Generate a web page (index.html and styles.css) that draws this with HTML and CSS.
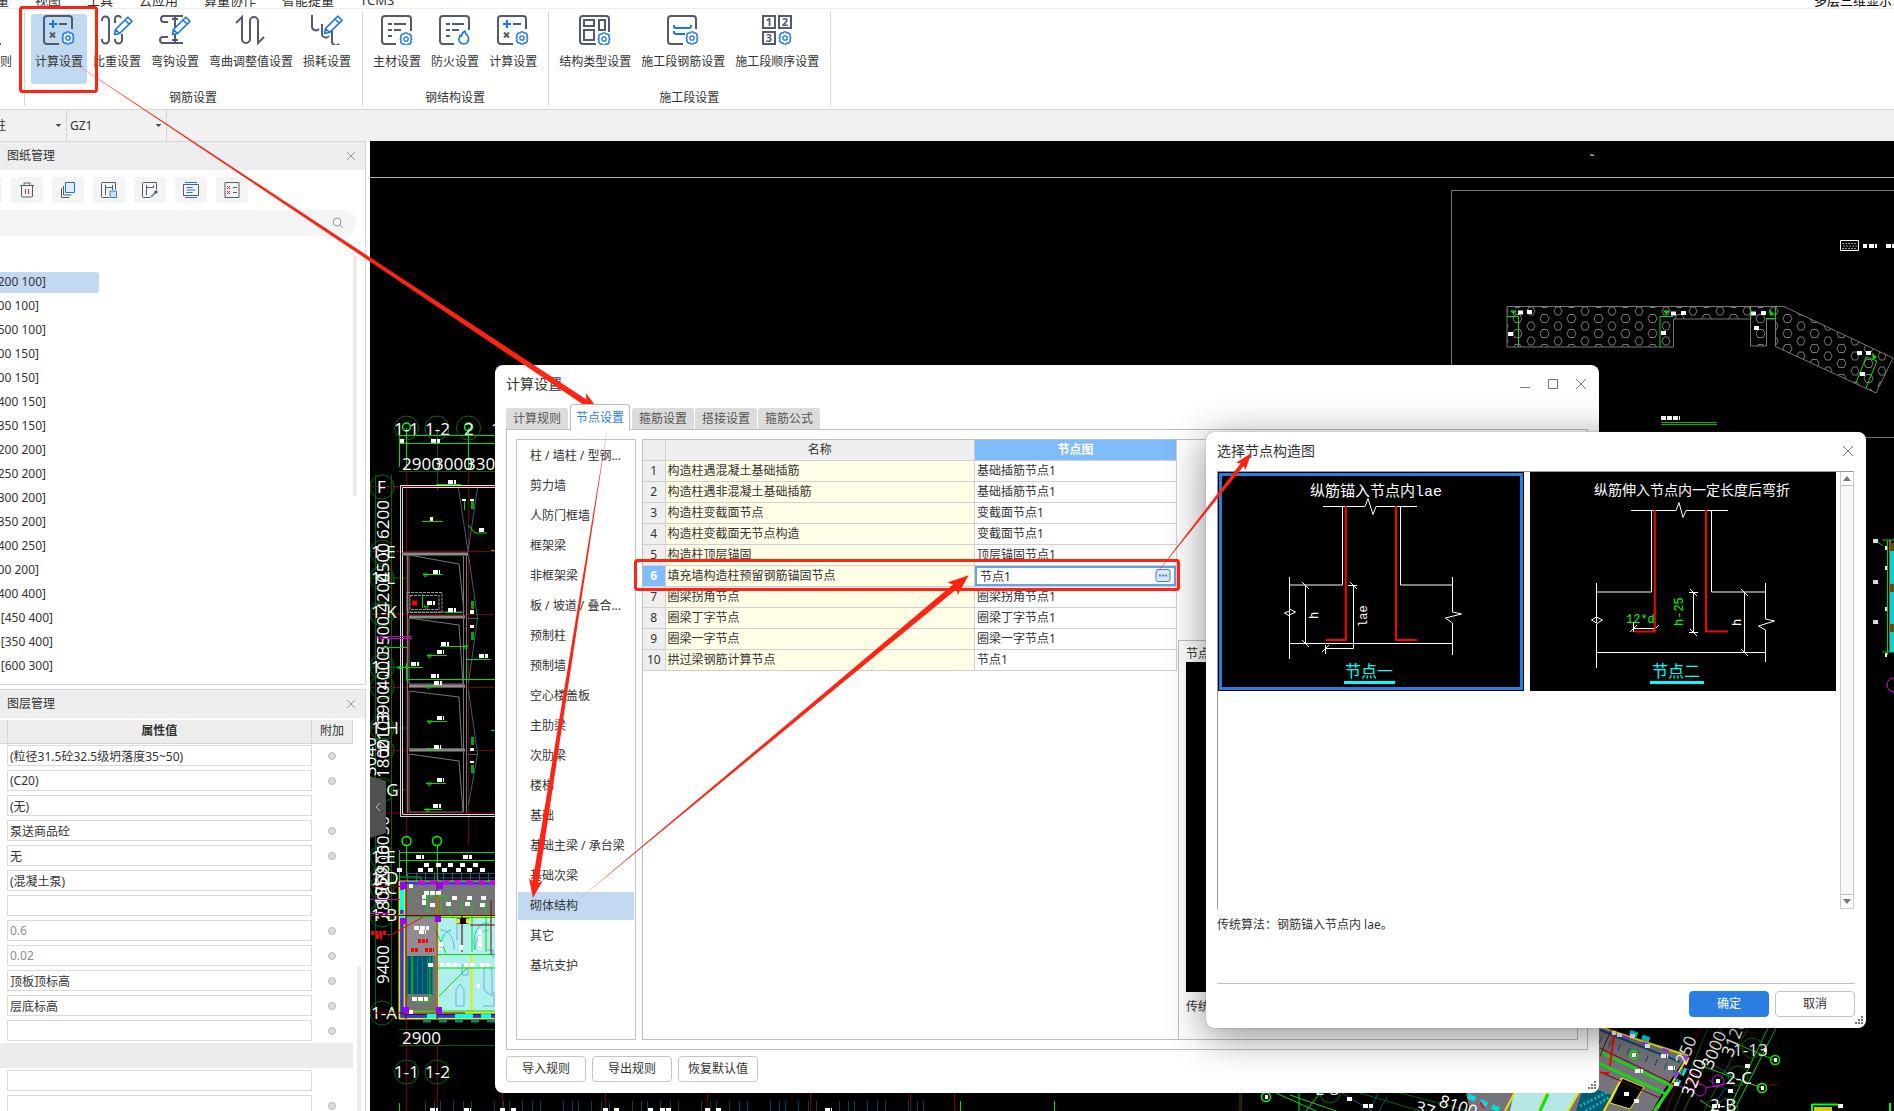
FILE: index.html
```html
<!DOCTYPE html>
<html lang="zh-CN">
<head>
  <meta charset="UTF-8" />
  <meta name="viewport" content="width=device-width, initial-scale=1" />
  <title>计算设置</title>
  <link rel="stylesheet" href="styles.css">
</head>
<body>
  <!-- shared icon parts -->
  <svg class="defs" aria-hidden="true">
    <symbol id="gear" viewBox="0 0 14 14">
      <path d="M5 2.2 6 .8h2l1 1.4 1.800-.2 1.600 2-.6 1.600 1 1.400-1 1.400.6 1.600-1.600 2-1.800-.2-1 1.400H6l-1-1.400-1.800.2-1.600-2 .6-1.600-1-1.400 1-1.400-.6-1.600 1.600-2z" fill="#fff" fill-opacity=".5" stroke="#1a73e8" stroke-width="1.3" stroke-linejoin="round"/>
      <circle cx="7" cy="7" r="2.2" fill="none" stroke="#1a73e8" stroke-width="1.3"/>
    </symbol>
    <symbol id="pencil" viewBox="0 0 20 20">
      <path d="M1.5 18.5l1-5L14 2l1-.8 4 4-.8 1L6.500 17.500zM12 4l4 4M2.500 13.500l4 4" fill="#fff" stroke="#1a73e8" stroke-width="1.6" stroke-linejoin="round"/>
    </symbol>
    <symbol id="calc" viewBox="0 0 32 30">
      <path class="ln" d="M29 14V4a3 3 0 0 0-3-3H4a3 3 0 0 0-3 3v22a3 3 0 0 0 3 3h12M16 9h8M7 17.500l5 5M12 17.500l-5 5"/>
      <path d="M6 9h8M10 5v8" fill="none" stroke="#1a73e8" stroke-width="2"/>
      <use href="#gear" x="18" y="16" width="14" height="14"/>
    </symbol>
  </svg>

  <nav class="menu">
    <a href="#">工程量</a><a href="#">视图</a><a href="#">工具</a><a href="#">云应用</a><a href="#">算量协作</a><a href="#">智能提量</a><a href="#">TCMS</a>
    <a class="menu-end" href="#">多层三维显示设置</a>
  </nav>

  <header class="ribbon">
    <section class="group group-cut">
      <div class="tools">
        <button class="tool"><svg width="32" height="30"><path class="ln" d="M17 6l8 8-8 8M15 29h14"/></svg>计算规则</button>
      </div>
    </section>
    <section class="group">
      <div class="tools">
        <button class="tool on"><svg width="32" height="30"><use href="#calc"/></svg>计算设置</button>
        <button class="tool"><svg width="32" height="30"><path class="ln" d="M1 6V5a3 3 0 0 1 7 0v20a3 3 0 0 1-7 0v-1M14 8V5a3 3 0 0 1 6-2M14 24v1a3 3 0 0 0 7 0v-6"/><use href="#pencil" x="12" y="1" width="20" height="20"/></svg>比重设置</button>
        <button class="tool"><svg width="32" height="30"><path class="ln" d="M24 1H5a3 3 0 0 0 0 6h4M24 28H4a3 3 0 0 1 0-6h5M16 1v27M13 4h6M13 25h6"/><use href="#pencil" x="12" y="1" width="20" height="20"/></svg>弯钩设置</button>
        <button class="tool"><svg width="32" height="30"><path class="ln" d="M1 8l6-6v22a4 4 0 0 0 8 0V6a4 4 0 0 1 8 0v22l6-6"/></svg>弯曲调整值设置</button>
        <button class="tool"><svg width="32" height="30"><path class="ln" d="M1 0v12a4 4 0 0 0 7 2M11 9v11a4 4 0 0 0 7 1M21 16v10a4 4 0 0 0 7 3"/><use href="#pencil" x="12" y="0" width="20" height="20"/></svg>损耗设置</button>
      </div>
      <h2>钢筋设置</h2>
    </section>
    <section class="group">
      <div class="tools">
        <button class="tool"><svg width="32" height="30"><path class="ln" d="M30 16V4a3 3 0 0 0-3-3H4a3 3 0 0 0-3 3v22a3 3 0 0 0 3 3h11M7 9h4M13 9h12M7 15h4M13 15h7M7 21h4"/><use href="#gear" x="18" y="17" width="14" height="14"/></svg>主材设置</button>
        <button class="tool"><svg width="32" height="30"><path class="ln" d="M30 15V4a3 3 0 0 0-3-3H4a3 3 0 0 0-3 3v22a3 3 0 0 0 3 3h11M7 9h4M13 9h12M7 15h4M13 15h7M7 21h4"/><path d="M21 20c1 2 2 1 2 0 0-2 1-3 3-4 0 3 3 4 3.500 7 .5 4-2 6-4.500 6s-5.500-2-5-5c0-2 1-2 1-4z" fill="#fff" stroke="#1a73e8" stroke-width="1.6" stroke-linejoin="round"/></svg>防火设置</button>
        <button class="tool"><svg width="32" height="30"><use href="#calc"/></svg>计算设置</button>
      </div>
      <h2>钢结构设置</h2>
    </section>
    <section class="group">
      <div class="tools">
        <button class="tool"><svg width="32" height="30"><path class="ln" d="M30 17V4a3 3 0 0 0-3-3H4a3 3 0 0 0-3 3v22a3 3 0 0 0 3 3h13M5 5h10v6H5zM20 5h6v10h-6zM5 15h10v10H5z"/><use href="#gear" x="18" y="17" width="14" height="14"/></svg>结构类型设置</button>
        <button class="tool"><svg width="32" height="30"><path class="ln" d="M29 14V4a3 3 0 0 0-3-3H4a3 3 0 0 0-3 3v22a3 3 0 0 0 3 3h12"/><path d="M7 10v1a2 2 0 0 0 2 2h13a2 2 0 0 0 2-2v-1M7 16v1a2 2 0 0 0 2 2h9" fill="none" stroke="#1a73e8" stroke-width="2"/><use href="#gear" x="18" y="16" width="14" height="14"/></svg>施工段钢筋设置</button>
        <button class="tool"><svg width="32" height="30"><path class="ln" d="M2 1h12v12H2zM18 1h12v12H18zM2 17h12v12H2z"/><g class="num"><text x="8" y="11">1</text><text x="24" y="11">2</text><text x="8" y="27">3</text></g><use href="#gear" x="17" y="16" width="14" height="14"/></svg>施工段顺序设置</button>
      </div>
      <h2>施工段设置</h2>
    </section>
  </header>

  <div class="combos">
    <select class="combo combo-kind" aria-label="构件类型"><option>构造柱</option></select>
    <select class="combo" aria-label="构件名称"><option>GZ1</option></select>
  </div>

  <main class="work">
    <aside class="side">
      <section class="panel sheets">
        <header class="panel-head"><h2>图纸管理</h2><button aria-label="关闭图纸管理"><svg width="10" height="10"><path d="M1 1l8 8M9 1L1 9"/></svg></button></header>
        <div class="sheet-tools">
          <button aria-label="添加"></button>
          <button aria-label="删除"><svg width="16" height="16"><path class="thin" d="M1 3.500h14M5 3V1h6v2M2.500 4v10a1 1 0 0 0 1 1h9a1 1 0 0 0 1-1V4"/><path d="M6.500 7v5M9.500 7v5" stroke="#d22"/></svg></button>
          <button aria-label="复制"><svg width="16" height="16"><path d="M5.500.5h9v10h-9z" fill="#e3eefc" stroke="#1a73e8"/><path class="thin" d="M3.500 4v9h8M1.500 6v9.500h8"/></svg></button>
          <button aria-label="保存图纸"><svg width="16" height="16"><path class="thin" d="M8 15.500H1.500A1 1 0 0 1 .5 14.500v-13a1 1 0 0 1 1-1h13v7M4.500 3v10M4.500 5.500h7V3M11.500 5v3"/><path d="M9 9h6.500v6.500H9z" fill="#cfe1fa" stroke="#3b82e0"/></svg></button>
          <button aria-label="编辑图纸"><svg width="16" height="16"><path class="thin" d="M8 15.500H1.500A1 1 0 0 1 .5 14.500v-13a1 1 0 0 1 1-1h13v7M4.500 3v10M4.500 5.500h7V3"/><path d="M9 15l5-5" stroke="#8a93a5" stroke-width="2"/><path d="M13 9l2 2" stroke="#555b6b" stroke-width="3"/></svg></button>
          <button aria-label="图层显示"><svg width="16" height="16"><path class="thin" d="M.5 2.500h15v11H.5z"/><path d="M2 .5h12M2 15.500h12M3.500 5.500h6M3.500 8h9M3.500 10.500h6" stroke="#1a73e8"/></svg></button>
          <button aria-label="图层清单"><svg width="16" height="16"><path class="thin" d="M1 .5h14v15H1zM9 5.500h4M9 10.500h4"/><path d="M3 4l3 3M6 4L3 7M3 9l3 3M6 9l-3 3" stroke="#d22"/></svg></button>
        </div>
        <label class="search">
          <input type="text" aria-label="搜索图纸" />
          <svg width="12" height="12"><circle cx="5" cy="5" r="4"/><path d="M8 8l2.500 2.500"/></svg>
        </label>
        <ul class="sheet-list">
          <li class="on">[200 100]</li><li class="short">[200 100]</li><li>[500 100]</li><li class="short">[200 150]</li><li class="short">[300 150]</li><li>[400 150]</li><li>[350 150]</li><li>[200 200]</li><li>[250 200]</li><li>[300 200]</li><li>[350 200]</li><li>[400 250]</li><li class="short">[500 200]</li><li>[400 400]</li><li class="long">[450 400]</li><li class="long">[350 400]</li><li class="long">[600 300]</li>
        </ul>
      </section>

      <section class="panel layers">
        <header class="panel-head"><h2>图层管理</h2><button aria-label="关闭图层管理"><svg width="10" height="10"><path d="M1 1l8 8M9 1L1 9"/></svg></button></header>
        <table class="props">
          <thead><tr><th class="c0"></th><th>属性值</th><th class="c2">附加</th></tr></thead>
          <tbody>
            <tr><td></td><td><input type="text" aria-label="混凝土类型" value="(粒径31.5砼32.5级坍落度35~50)" /></td><td><input type="checkbox" aria-label="附加" /></td></tr>
            <tr><td></td><td><input type="text" aria-label="混凝土强度等级" value="(C20)" /></td><td><input type="checkbox" aria-label="附加" /></td></tr>
            <tr><td></td><td><input type="text" aria-label="外加剂" value="(无)" /></td><td></td></tr>
            <tr><td></td><td><input type="text" aria-label="混凝土类别" value="泵送商品砼" /></td><td><input type="checkbox" aria-label="附加" /></td></tr>
            <tr><td></td><td><input type="text" aria-label="泵送高度" value="无" /></td><td><input type="checkbox" aria-label="附加" /></td></tr>
            <tr><td></td><td><input type="text" aria-label="泵送类型" value="(混凝土泵)" /></td><td></td></tr>
            <tr><td></td><td><input type="text" aria-label="备注一" value="" /></td><td></td></tr>
            <tr><td></td><td><input class="dim" type="text" aria-label="周长" value="0.6" /></td><td><input type="checkbox" aria-label="附加" /></td></tr>
            <tr><td></td><td><input class="dim" type="text" aria-label="面积" value="0.02" /></td><td><input type="checkbox" aria-label="附加" /></td></tr>
            <tr><td></td><td><input type="text" aria-label="顶标高" value="顶板顶标高" /></td><td><input type="checkbox" aria-label="附加" /></td></tr>
            <tr><td></td><td><input type="text" aria-label="底标高" value="层底标高" /></td><td><input type="checkbox" aria-label="附加" /></td></tr>
            <tr><td></td><td><input type="text" aria-label="备注二" value="" /></td><td><input type="checkbox" aria-label="附加" /></td></tr>
            <tr class="sep"><td></td><td></td><td></td></tr>
            <tr><td></td><td><input type="text" aria-label="其它钢筋" value="" /></td><td></td></tr>
            <tr><td></td><td><input type="text" aria-label="汇总信息" value="" /></td><td><input type="checkbox" aria-label="附加" /></td></tr>
          </tbody>
        </table>
      </section>
    </aside>

    <div class="canvas">
      <svg class="cad" viewBox="370 141 1524 970" preserveAspectRatio="xMinYMin slice">
        <defs>
          <pattern id="stone" x="1531" y="311" width="27" height="15" patternUnits="userSpaceOnUse">
            <path d="M9 7.500l2-4h5l2 4-2 4h-5zM-4 0l2-4h4l2 4-2 4h-4zM23 0l2-4h4l2 4-2 4h-4zM-4 15l2-4h4l2 4-2 4h-4zM23 15l2-4h4l2 4-2 4h-4z" fill="none" stroke="#777"/>
          </pattern>
        </defs>

        <!-- upper right: frame and wall section -->
        <path class="w2" d="M370 177.500H1894"/>
        <path class="w3" d="M1894 190.500H1451.500V437.500H1894"/>
        <path d="M1507 306.500H1784L1893 358L1876 393L1775.500 346.500V319H1766.500V346H1750.500V319H1673.500V347H1507z" fill="url(#stone)" stroke="#777"/>
        <path class="g" d="M1507 316.500h11.500V347M1660 347v-30.500h13M1750.500 306v13M1766 318.500h9.500V306M1856 383l10-26 11 4-11 27"/>
        <path class="gf" d="M1510 310.500h7l-3.500 4zM1663 310.500h7l-3.500 4zM1769 309l5 5-4 2zM1872 353l5 4-4 3z"/>
        <path class="blob" d="M1518 312.500h6M1527 312h6M1671 313.500h6M1681 313h6M1751 313.500h6M1761 313h5M1508 334h6M1661 333h6M1754 328h5M1857 353h6M1866 353h5M1860 374h5"/>
        <path d="M1840.500 240.500h18v10h-18z" fill="none" stroke="#fff"/><path d="M1842 243.500h15M1843 246h15M1842 248.500h15" fill="none" stroke="#999" stroke-dasharray="2 1"/>
        <path class="blob" d="M1863 246h4M1869 246h8M1886 246h8M1661 418h19"/>
        <path d="M1590 155h3l1 1" fill="none" stroke="#fff"/>
        <path d="M1661 422.500h56M1661 424.500h56" stroke="#00c800"/>

        <!-- right edge strip -->
        <path class="g" d="M1887.500 540V655M1882 540h12M1873 541l6 2 4 3M1873 582l6 2M1873 622l6 2M1882 652h12"/>
        <path d="M1890 540v112" stroke="#ff0"/><path d="M1892 544v108" stroke="#0dd" stroke-width="4"/><path d="M1892 543v8M1892 584v8M1892 624v8" stroke="#665500" stroke-width="4"/>
        <path class="blob" d="M1873 541h5M1873 582h5M1873 622h5M1885 548h2M1885 568h2M1885 609h2M1885 655h2"/>
        <circle cx="1894" cy="685" r="7" fill="none" stroke="#f0f"/>

        <!-- axis grid -->
        <path d="M375.500 475V1013M391.500 475V1013M399 471.500h96M437.500 428V490M399 1029.500h96M399 1045.500h96M370 578h36M370 614h36M370 667h36M370 728h36M370 790h36" class="dg"/>
        <path class="g" d="M399 435.500h96M399 443.500h96M399.500 435v32M406.500 428v44M468.500 428v44"/>
        <path class="dr" d="M406.500 470V1111M437.500 1040V1111M468.500 470V845M370 486.500h125M370 551.500h125M370 614.500h125M370 687.500h125M370 750.500h125M370 813h125"/>
        <g class="hexes">
          <circle cx="406.500" cy="428" r="12"/><circle cx="437" cy="428" r="12"/><circle cx="468.500" cy="428" r="12"/>
          <circle cx="382" cy="487" r="12"/><circle cx="382" cy="552" r="12"/><circle cx="382" cy="578" r="12"/><circle cx="382" cy="614" r="12"/><circle cx="382" cy="667" r="12"/><circle cx="382" cy="687" r="12"/><circle cx="382" cy="728" r="12"/><circle cx="382" cy="750" r="12"/><circle cx="382" cy="790" r="12"/><circle cx="382" cy="857" r="12"/><circle cx="382" cy="878" r="12"/><circle cx="382" cy="888" r="12"/><circle cx="382" cy="915" r="12"/><circle cx="382" cy="1013" r="12"/>
          <circle cx="406.500" cy="1072" r="12"/><circle cx="437" cy="1072" r="12"/>
        </g>
        <g fill="none" stroke="#0f0" stroke-width="1.5"><circle cx="406.500" cy="427" r="4"/><circle cx="468.500" cy="427" r="4"/><circle cx="406.500" cy="841" r="4.500"/><circle cx="437" cy="841" r="4.500"/></g>
        <g class="cadtext">
          <text x="394" y="435">1-1</text><text x="425" y="435">1-2</text><text x="464" y="435">2</text><text x="491" y="435">1-3</text>
          <text x="402" y="470">2900</text><text x="434" y="470">3000</text><text x="466" y="470">3300</text>
          <text x="377" y="493">F</text><text x="371" y="558">1-E</text><text x="371" y="584">1-L</text><text x="371" y="618">1-K</text><text x="371" y="673">1-J</text><text x="371" y="734">1-H</text><text x="378" y="756">H</text><text x="371" y="796">1-G</text><text x="371" y="863">1-E</text><text x="371" y="884">1-D</text><text x="371" y="894">1-C</text><text x="371" y="921">1-B</text><text x="371" y="1019">1-A</text>
          <text x="402" y="1044">2900</text><text x="394" y="1078">1-1</text><text x="425" y="1078">1-2</text>
          <text transform="translate(389 539) rotate(-90)">6200</text>
          <text transform="translate(389 582) rotate(-90)">4500</text>
          <text transform="translate(389 612) rotate(-90)">4200</text>
          <text transform="translate(389 655) rotate(-90)">3500</text>
          <text transform="translate(389 690) rotate(-90)">4000</text>
          <text transform="translate(389 724) rotate(-90)">3900</text>
          <text transform="translate(389 750) rotate(-90)">2103</text>
          <text transform="translate(389 778) rotate(-90)">1800</text>
          <text transform="translate(376 776) rotate(-90)">3040</text>
          <text transform="translate(389 855) rotate(-90)">6050</text>
          <text transform="translate(389 884) rotate(-90)">2800</text>
          <text transform="translate(387 906) rotate(-90)">1950</text>
          <text transform="translate(389 920) rotate(-90)">2800</text>
          <text transform="translate(389 984) rotate(-90)">9400</text>
        </g>

        <!-- left block of rooms -->
        <path class="w" d="M495 485.500H400.500V816.500H495M495 487.500H402.500V814.500H495"/>
        <path d="M402 554h66M409 617h56M409 686h56M409 750h56" fill="none" stroke="#8c8c8c" stroke-width="3"/>
        <path d="M407.500 554V813M463.500 556V812M466.500 554V813M409 555l50 9 5 48H409zM409 618l50 7 4 59H409zM409 691l50 6 3 52H409zM409 754l50 7 4 51H409z" fill="none" stroke="#777"/>
        <path d="M407 592.500h35v20h-35zM410 595.500h29v14h-29z" fill="none" stroke="#999" stroke-dasharray="3 1"/>
        <path d="M412 603h5" stroke="red" stroke-width="5"/>
        <path d="M458.500 488L468 551.500L477.500 488M468.500 555L477.500 618L468.500 683M468.500 690L477.500 754L468.500 805M468 618.500h10M468 754.500h10" fill="none" stroke="#356478"/>
        <path class="g" d="M422 521.500h21M423 574.500h20M445 612.500h17M428 655.500h19M440 646.500h27M397 667.500h26M428 686.500h15M428 721.500h19M426 748.500h17M426 783.500h20M424 809.500h18M406 679.500h89M406.500 663v18M466 659.500h25M380 647.500h27M436 484.500h25M468 525l7 8h12M464.500 501v9M422.500 594v14M466.500 663v18M491 550.500h4M491 730.500h4"/>
        <path d="M472.500 501v8M472.500 601v8M472.500 632v8M472.500 737v8M472.500 765v8" stroke="#0a0" stroke-width="3"/>
        <path class="g" d="M423 574h5l-2.500 3zM424 606h5l-2.500 3zM427 655h5l-2.500 3zM463 646h5l-2.500 3zM398 667h5l-2.500 3zM426 686h5l-2.500 3zM427 721h5l-2.500 3zM427 783h5l-2.500 3zM425 809h5l-2.500 3z"/>
        <path class="blob" d="M400 441h4M431 441h9M448 482h8M430 519h3M433 572h7M427 603h8M448 610h8M441 644h8M437 652h7M411 664h8M431 676h8M434 683h8M437 718h7M434 747h7M437 780h7M433 806h8M479 656h9M479 530h6M464 499v2M472 499v2M472 610v4M472 625v3M472 748v3M472 761v2"/>
        <path d="M376 636.500h36M380 638.500h32" stroke="#c0c"/>

        <!-- lower left plan -->
        <path class="g" d="M399 852.500h96M399 860.500h96M406.500 846v30M437.500 846v36M399.500 850v30M400 877h21v8"/>
        <path d="M406 873.500h89M407 878h88" stroke="#0a5a78"/><path d="M407 877.500h88" stroke="#0a6a88" stroke-width="10" stroke-dasharray="1 8"/>
        <path class="blob" d="M416 857h8M463 857h9M424 865h5M436 865h5M448 865h5M460 865h5M473 865h5M397 870h5M418 870h5M428 870h5M442 870h5M456 870h5M467 870h5M480 870h5"/>
        <path d="M401 884h94v130h-94z" fill="#747474"/>
        <path d="M406 918h31v38h-31z" fill="#918b94"/>
        <path d="M407 956h26v38h-26z" fill="#00546c"/>
        <path d="M407 976h26" stroke="#0a7a92" stroke-width="38" stroke-dasharray="1 4"/>
        <path d="M438 917h57v96h-57z" fill="#aef0ec"/>
        <path d="M399.500 881V1019M399 881.500h96M404.500 884V1012M399 1018.500h96M437 895V1012M471.500 954V1012M405 1012.500h90M438 917h57" fill="none" stroke="#e8e800" stroke-width="2"/>
        <path d="M402 884V1016H495M400 883h95" fill="none" stroke="#33f" stroke-width="3"/>
        <path d="M418 882.500h77" stroke="#c0f" stroke-width="4" stroke-dasharray="7 5"/>
        <path d="M427 1016h68" stroke="#0ff" stroke-width="4" stroke-dasharray="10 18 18 8"/>
        <path d="M423 1021h72" stroke="#088" stroke-width="3" stroke-dasharray="8 8"/>
        <path d="M402 890v20M402 914v6" stroke="#0ff" stroke-width="4"/>
        <path d="M462 975v-8l3-4 3 4v8zM456 1006v-16l4-6 4 6v16zM457 918v22M462 918v30M484 990v-20l4-6 4 6v26zM483 1006h11v-14M487 950h6v8M440 930c10 0 14 8 14 20M475 950c0-12 6-20 14-20" fill="none" stroke="#79a8e8"/>
        <path d="M441 948c0-10 3-16 10-18M475 950c-4-18 6-30 14-26" fill="none" stroke="#0cc"/>
        <path class="g" d="M405 917.500h90M437 954.500h58M422 896h25M427.500 890v22M445 896l8 22M439 996l28-28M406 1011h89M441 902v16M462 902v16M472 902v50M486 902v50M412 956v40l4 6h12M430 956v46M434 927l12 26M438 968h57"/>
        <path class="dr" d="M370 886.500h30M370 915.500h125M462 916v36M470 925h25M491 900v55M406 881V1019M437 881V1019M370 1013h95"/>
        <path class="blob" d="M424 893h18M414 928h15M419 932h7M412 999h16M424 905v-10M430 905h5M446 904h5M465 904h5M480 905h5M428 965h5M452 898h6M467 898h5M481 898h6M480 930v20M461 945v6M449 988h2M477 986h3M440 965h20M464 965h12M480 965h10M441 942v8M409 886h4M409 1012h4"/>
        <path d="M457 921h12" stroke="#200" stroke-width="6"/><path d="M457 921h3M466 921h3" stroke="#ee0" stroke-width="5"/>
        <g fill="#90f"><path d="M400 883h6v6h-6zM437 883h6v6h-6zM400 918h6v6h-6zM435 916h6v6h-6zM403 1007h6v6h-6zM436 1007h6v6h-6z"/></g>
        <path d="M418 941h10M411 950h8M425 950h9M371 933h16M376 937h6" stroke="red" stroke-width="4" stroke-dasharray="3 1"/>
        <path d="M387 934.500h5L423 917" fill="none" stroke="red"/>
        <path d="M370 899.500h30M370 913.500h20" stroke="#c0c"/>

        <!-- strip under the dialog -->
        <path d="M425 1106h505" stroke="#00445c" stroke-width="10" stroke-dasharray="1 8 1 5 1 12 1 9 1 7 1 22"/>
        <path class="dr" d="M502.500 1090v21M605.500 1090v21M707.500 1090v21M810.500 1090v21M910.500 1090v21M954.500 1090v21M1241.500 1090v21"/>
        <path class="g" d="M399.500 1103v8M960.500 1101v10M1054.500 1101v10M1299 1093v18"/>
        <path class="blob" d="M430 1110h8M464 1110h7M500 1110h6M511 1110h6M603 1110h5M614 1110h6M648 1110h6M660 1110h12M705 1110h5M716 1110h6M825 1110h7"/>

        <!-- lower right rotated wing -->
        <path d="M1590 1025L1688 1054L1664 1090L1652 1111H1470L1466 1093L1590 1093z" fill="#77737a"/>
        <path d="M1514 1092h66l-12 19h-58z" fill="#b4e6e4"/>
        <path d="M1584 1085l28 10-10 16h-26z" fill="#045a74"/>
        <path d="M1580 1106l28-14M1586 1111l24-14" stroke="#0bb" stroke-dasharray="2 2" stroke-width="3"/>
        <path d="M1622 1078l22 9-14 22-20-6z" fill="#000" stroke="#ee0"/>
        <path d="M1600 1027L1688 1056L1656 1111M1515 1092l-10 19M1547 1092l-8 19M1580 1090l-12 21M1622 1078l-18 33" fill="none" stroke="#e6e600" stroke-width="2"/>
        <path d="M1602 1030l84 27-30 54" fill="none" stroke="#93f" stroke-width="3" stroke-dasharray="7 14"/>
        <path d="M1630 1032l20 8M1685 1068l-8 16M1468 1096l32 14" stroke="#0dd" stroke-width="5" stroke-dasharray="8 5"/>
        <path d="M1600 1052l72 34-18 25M1596 1062l70 32M1548 1094l-8 17" fill="none" stroke="#1d1" stroke-width="3"/>
        <path d="M1600 1030l80 32" stroke="#06506c" stroke-width="2"/><path d="M1600 1040l80 32" stroke="#06506c" stroke-width="7" stroke-dasharray="1 9"/>
        <path class="dr" d="M1600 1048l78 38M1612 1028l-12 28M1700 1028l-34 83M1720 1028l-36 83M1600 1072l60 26M1738 1085h40"/>
        <path class="g" d="M1776 1028l-42 83M1768 1028l-40 83M1728 1040l46 20M1702 1066l60 22M1290 1095l46 16M1276 1093l40 18M1320 1093l-14 18M1700 1100l16 11"/>
        <path class="dg" d="M1708 1028l-34 83M1722 1028l-38 83M1748 1028l-44 83M1360 1093l60 18M1400 1093l70 18M1240 1093v18"/>
        <path d="M1342 1093l30 18M1378 1093l-8 18M1387 1097l-8 14M1712 1064l24 14M1708 1080l28 14M1712 1108l12-18" stroke="#0a5570"/>
        <g fill="none" stroke="#d0d"><circle cx="1718" cy="1081" r="6"/><circle cx="1700" cy="1090" r="6"/><path d="M1686 1068l14 10M1706 1088l28-6M1670 1084l24 6"/></g>
        <g class="hexes"><circle cx="1752" cy="1048" r="10"/><circle cx="1738" cy="1076" r="10"/><circle cx="1728" cy="1108" r="10"/><circle cx="1330" cy="1093" r="10"/></g>
        <g fill="none" stroke="#0f0" stroke-width="1.5"><circle cx="1634" cy="1055" r="4"/><circle cx="1775" cy="1060" r="4.500"/><circle cx="1762" cy="1088" r="4.500"/><circle cx="1266" cy="1097" r="4.500"/></g>
        <path d="M1614 1034l-4 32M1688 1076l3 6M1601 1073h8M1480 1102l4 6" fill="none" stroke="red" stroke-width="2"/>
        <path class="blob" d="M1612 1033h4M1617 1035h6M1630 1036h5M1645 1046h5M1661 1056h7M1632 1055h4M1635 1071h8M1668 1068h7M1674 1084h5M1624 1094h6M1634 1101h5M1764 1050h3M1728 1091h5M1774 1060h3M1761 1088h3M1265 1097h3M1347 1099h6M1363 1106h10M1745 1066h5M1716 1081h4M1712 1106h8"/>
        <g class="cadtext">
          <text x="1733" y="1056">1-13</text><text x="1726" y="1084">2-C</text><text x="1710" y="1111">2-B</text><text x="1315" y="1095">E-3</text>
          <text transform="translate(1686 1066) rotate(-68)">250</text><text transform="translate(1692 1098) rotate(-68)">3200</text><text transform="translate(1712 1070) rotate(-68)">3000</text><text transform="translate(1732 1058) rotate(-68)">3120</text>
          <text transform="translate(1438 1106) rotate(18)">8100</text><text transform="translate(1414 1112) rotate(18)">37</text>
        </g>
        <path d="M1812 1104.500h26M1812 1104v7M1890 1103v8" stroke="#0f0" stroke-width="2" fill="none"/><path d="M1814 1107h18v4h-18z" fill="#cc0"/><path class="blob" d="M1838 1106h6"/>
      </svg>

      <button class="collapse" aria-label="收起"><svg width="6" height="10"><path d="M5 1L1 5l4 4"/></svg></button>

      <!-- 计算设置 -->
      <section class="dialog dialog-calc" role="dialog" aria-labelledby="t1">
        <header class="dialog-head">
          <h1 id="t1">计算设置</h1>
          <div class="win">
            <button aria-label="最小化"><svg width="12" height="12"><path d="M1 9.500h10"/></svg></button>
            <button aria-label="最大化"><svg width="12" height="12"><path d="M1.500 1.500h9v9h-9z"/></svg></button>
            <button aria-label="关闭"><svg width="12" height="12"><path d="M1 1l10 10M11 1L1 11"/></svg></button>
          </div>
        </header>
        <div class="tabs" role="tablist">
          <button role="tab">计算规则</button><button role="tab" class="on" aria-selected="true">节点设置</button><button role="tab">箍筋设置</button><button role="tab">搭接设置</button><button role="tab">箍筋公式</button>
        </div>
        <div class="tab-body">
          <div class="cats">
            <button>柱 / 墙柱 / 型钢...</button><button>剪力墙</button><button>人防门框墙</button><button>框架梁</button><button>非框架梁</button><button>板 / 坡道 / 叠合...</button><button>预制柱</button><button>预制墙</button><button>空心楼盖板</button><button>主肋梁</button><button>次肋梁</button><button>楼梯</button><button>基础</button><button>基础主梁 / 承台梁</button><button>基础次梁</button><button class="on">砌体结构</button><button>其它</button><button>基坑支护</button>
          </div>
          <div class="nodes">
            <table>
              <thead><tr><th class="no"></th><th>名称</th><th class="pic">节点图</th></tr></thead>
              <tbody>
                <tr><th>1</th><td>构造柱遇混凝土基础插筋</td><td>基础插筋节点1</td></tr>
                <tr><th>2</th><td>构造柱遇非混凝土基础插筋</td><td>基础插筋节点1</td></tr>
                <tr><th>3</th><td>构造柱变截面节点</td><td>变截面节点1</td></tr>
                <tr><th>4</th><td>构造柱变截面无节点构造</td><td>变截面节点1</td></tr>
                <tr><th>5</th><td>构造柱顶层锚固</td><td>顶层锚固节点1</td></tr>
                <tr class="on"><th>6</th><td>填充墙构造柱预留钢筋锚固节点</td><td><div class="edit"><input type="text" aria-label="节点图" value="节点1" /><button aria-label="选择节点构造图"><svg width="16" height="13"><rect x="1" y=".5" width="14" height="12" rx="2"/><path d="M4 6.500h2M7 6.500h2M10 6.500h2" stroke-width="2"/></svg></button></div></td></tr>
                <tr><th>7</th><td>圈梁拐角节点</td><td>圈梁拐角节点1</td></tr>
                <tr><th>8</th><td>圈梁丁字节点</td><td>圈梁丁字节点1</td></tr>
                <tr><th>9</th><td>圈梁一字节点</td><td>圈梁一字节点1</td></tr>
                <tr><th>10</th><td>拱过梁钢筋计算节点</td><td>节点1</td></tr>
              </tbody>
            </table>
            <div class="preview">
              <h3>节点图</h3>
              <div class="preview-pic"></div>
              <p>传统算法：钢筋锚入节点内 lae。</p>
            </div>
          </div>
        </div>
        <footer class="dialog-foot">
          <button class="btn">导入规则</button><button class="btn">导出规则</button><button class="btn">恢复默认值</button>
        </footer>
        <svg class="grip" width="10" height="10"><path d="M7 1h2M4 4h2M7 4h2M1 7h2M4 7h2M7 7h2"/></svg>
      </section>

      <!-- 选择节点构造图 -->
      <section class="dialog dialog-pick" role="dialog" aria-labelledby="t2">
        <header class="dialog-head">
          <h1 id="t2">选择节点构造图</h1>
          <div class="win"><button aria-label="关闭"><svg width="12" height="12"><path d="M1 1l10 10M11 1L1 11"/></svg></button></div>
        </header>
        <div class="picks">
          <button class="pick on" aria-label="节点一">
            <svg viewBox="0 0 306 219">
              <g fill="none" stroke="#fff">
                <path d="M105 34.500h42l3-8 5 16 3-8h41M124.500 34v79H72M182.500 34v79h52M71.500 105v34l-5 2 5 3v-7l6 3-6 3v44M234.500 105v35l9 2-16 4 7 5v32M71.500 171.500h163M87.500 113v58M84 110l7 7M84 168l7 7M130 113.500h9M135.500 113v63.500h-28M132 110l7 7M107.500 173v9M104 180l7-7"/>
              </g>
              <path d="M127.800 34v134h-20M178 34v134h21" fill="none" stroke="red" stroke-width="2"/>
              <g class="node-text">
                <text x="92" y="24">纵筋锚入节点内lae</text>
                <text class="sm" transform="translate(100 147) rotate(-90)">h</text><text class="sm" transform="translate(149 155) rotate(-90)">lae</text>
              </g>
              <text class="node-name" x="127" y="205">节点一</text><path d="M126 210.500h51" stroke="#0ff" stroke-width="3"/>
            </svg>
          </button>
          <button class="pick" aria-label="节点二">
            <svg viewBox="0 0 306 219">
              <g fill="none" stroke="#fff">
                <path d="M101 38.500h45l3-8 4 15 3-7h42M121.500 38v82H67M181.500 38v82h54M66.500 111v34l-5 3 5 3v-6l6 3-6 4v44M235.500 111v36l9 2-16 5 7 4v32M66.500 180.500h169M214.500 120v60M211 117l7 7M211 177l7 7M163.500 120v40M159 120.500h9M160 117l7 7M159 160.500h9M160 157l7 7M103.500 150v10M103.500 156.500h22M100 160l7-7M122 160l7-7"/>
              </g>
              <path d="M124.800 38v121.500h-21M176 38v121.500h22" fill="none" stroke="red" stroke-width="2"/>
              <g class="node-text">
                <text class="mid" x="64" y="23">纵筋伸入节点内一定长度后弯折</text>
                <text class="sm" transform="translate(211 154) rotate(-90)">h</text>
                <text class="sm green" transform="translate(153 154) rotate(-90)">h-25</text><text class="sm green" x="96" y="151">12*d</text>
              </g>
              <text class="node-name" x="122" y="205">节点二</text><path d="M120 210.500h54" stroke="#0ff" stroke-width="3"/>
            </svg>
          </button>
          <div class="vbar"><button aria-label="向上"><svg width="8" height="5"><path d="M0 5l4-5 4 5z"/></svg></button><button aria-label="向下"><svg width="8" height="5"><path d="M0 0l4 5 4-5z"/></svg></button></div>
        </div>
        <p class="note">传统算法：钢筋锚入节点内 lae。</p>
        <footer class="dialog-foot end">
          <button class="btn primary">确定</button><button class="btn">取消</button>
        </footer>
        <svg class="grip" width="10" height="10"><path d="M7 1h2M4 4h2M7 4h2M1 7h2M4 7h2M7 7h2"/></svg>
      </section>
    </div>
  </main>

  <!-- red step marks -->
  <svg class="marks" aria-hidden="true">
    <rect x="20.500" y="7.500" width="76" height="84" rx="2"/>
    <rect x="635.500" y="560.500" width="543" height="29" rx="2"/>
    <path d="M0 0L631 -3L627 -8L650 0L627 8L631 3z" transform="translate(59 53) rotate(33.57)"/>
    <path d="M0 0L464 -3L461 -7L480 0L461 7L464 3z" transform="translate(608 424) rotate(99)"/>
    <path d="M0 0L490 -3L487 -8L508 0L487 8L490 3z" transform="translate(578 900) rotate(-39.73)"/>
    <path d="M0 0L144 -2L142 -6L159 0L142 6L144 2z" transform="translate(1153 578) rotate(-51.8)"/>
  </svg>
</body>
</html>
```
FILE: styles.css
```css
* {
  box-sizing: border-box;
}
body {
  margin: 0;
  height: 100vh;
  display: flex;
  flex-direction: column;
  overflow: hidden;
  position: relative;
  font-family: "Noto Sans", "Noto Sans CJK SC", sans-serif;
  font-size: 12px;
  line-height: 16px;
  color: #333;
  background: #fff;
}
h1, h2, h3, p, ul {
  margin: 0;
  padding: 0;
  font-size: 12px;
  font-weight: normal;
}
button, input, select {
  font: inherit;
  color: inherit;
  margin: 0;
}
button {
  padding: 0;
  border: none;
  background: none;
  cursor: pointer;
}
svg {
  display: block;
}
.defs {
  position: absolute;
  width: 0;
  height: 0;
}

/* menu */
.menu {
  flex: none;
  display: flex;
  align-items: flex-end;
  gap: 26px;
  height: 9px;
  margin-left: -30px;
  overflow: hidden;
  border-bottom: 1px solid #eee;
  font-size: 13px;
}
.menu a {
  color: #333;
  text-decoration: none;
  white-space: nowrap;
}
.menu .menu-end {
  margin-left: auto;
  margin-right: -24px;
  color: #000;
}

/* ribbon */
.ribbon {
  flex: none;
  display: flex;
  height: 101px;
  padding: 2px 0 3px;
  border-bottom: 1px solid #d5d8d8;
}
.group {
  display: flex;
  flex-direction: column;
  justify-content: space-between;
  padding: 3px 7px 0 6px;
  border-right: 1px solid #d8d8d8;
}
.group-cut {
  margin-left: -46px;
  padding-right: 8px;
}
.group h2 {
  text-align: center;
}
.tools {
  display: flex;
  gap: 2px;
}
.tool {
  display: flex;
  flex-direction: column;
  align-items: center;
  gap: 9px;
  height: 70px;
  padding: 1px 4px;
  border-radius: 3px;
  white-space: nowrap;
}
.tool.on {
  background: #c2d9f2;
}
.ln {
  fill: none;
  stroke: #535a6c;
  stroke-width: 2;
}
.num text {
  font-size: 11px;
  font-weight: bold;
  fill: #535a6c;
  text-anchor: middle;
}

/* combo row */
.combos {
  flex: none;
  display: flex;
  height: 31px;
  background: #f1f1f1;
}
.combo {
  width: 100px;
  padding: 0 3px;
  appearance: none;
  border: none;
  border-right: 1px solid #d5d5d5;
  border-radius: 0;
  background: linear-gradient(#4c5263, #4c5263) 89px 14px / 5px 1px no-repeat,
    linear-gradient(#4c5263, #4c5263) 90px 15px / 3px 1px no-repeat,
    linear-gradient(#4c5263, #4c5263) 91px 16px / 1px 1px no-repeat;
}
.combo-kind {
  margin-left: -33px;
}

/* left panels */
.work {
  flex: 1;
  min-height: 0;
  display: flex;
  gap: 4px;
}
.side {
  flex: none;
  width: 366px;
  display: flex;
  flex-direction: column;
  gap: 4px;
}
.panel {
  border: 1px solid #d5d5d8;
  border-left: none;
  overflow: hidden;
  background: #fff;
}
.sheets {
  flex: none;
}
.layers {
  flex: 1;
  min-height: 0;
  border-bottom: none;
  background: linear-gradient(#ebebeb, #ebebeb) 357px 276px / 4px 400px no-repeat;
}
.panel-head {
  display: flex;
  align-items: center;
  justify-content: space-between;
  height: 28px;
  padding: 0 9px 0 7px;
  background: #eeeef0;
}
.panel-head svg {
  fill: none;
  stroke: #999;
}
.sheet-tools {
  display: flex;
  gap: 9px;
  margin: 7px 0 7px -30px;
}
.sheet-tools button {
  display: flex;
  align-items: center;
  justify-content: center;
  width: 32px;
  height: 26px;
  border-radius: 3px;
  background: #f4f4f5;
}
.sheet-tools svg {
  fill: none;
}
.thin {
  fill: none;
  stroke: #555b6b;
}
.search {
  display: flex;
  align-items: center;
  height: 26px;
  margin: 0 9px 20px -20px;
  padding-right: 12px;
  border-radius: 13px;
  background: #f5f5f5;
}
.search input {
  flex: 1;
  border: none;
  background: none;
  outline: none;
}
.search svg {
  fill: none;
  stroke: #999;
}
.sheet-list {
  padding: 16px 0 4px;
  list-style: none;
  background: linear-gradient(#ebebeb, #ebebeb) 353px 0 / 4px 240px no-repeat;
}
.sheet-list li {
  display: flex;
  justify-content: flex-end;
  width: 99px;
  height: 21px;
  margin-bottom: 3px;
  padding-right: 53px;
  line-height: 20px;
  white-space: nowrap;
  border-radius: 0 3px 3px 0;
}
.sheet-list .on {
  background: #c2d9f2;
}
.sheet-list .short {
  padding-right: 60px;
}
.sheet-list .long {
  padding-right: 46px;
}

.props {
  width: 353px;
  table-layout: fixed;
  border-collapse: collapse;
}
.props th {
  height: 24px;
  padding: 0;
  border: 1px solid #d5d5d5;
  border-top: 2px solid #fff;
  background: #ededed;
}
.props .c0 {
  width: 7px;
  border-left: none;
}
.props .c2 {
  width: 41px;
  font-weight: normal;
}
.props td {
  height: 25px;
  padding: 0;
  text-align: center;
}
.props input[type=text] {
  display: block;
  width: 100%;
  height: 21px;
  padding: 0 2px;
  border: 1px solid #dadada;
  background: #fff;
}
.props .dim {
  color: #8c8c8c;
}
.props input[type=checkbox] {
  appearance: none;
  display: block;
  width: 8px;
  height: 8px;
  margin: 0 auto;
  border: 1px solid #b8b8b8;
  border-radius: 50%;
  background: #dcdcdc;
}
.props .sep td {
  background: #ececec;
}

/* drawing area */
.canvas {
  flex: 1;
  position: relative;
  overflow: hidden;
  background: #000;
}
.cad {
  position: absolute;
  inset: 0;
  width: 100%;
  height: 100%;
}
.w {
  fill: none;
  stroke: #ddd;
}
.w2 {
  fill: none;
  stroke: #b5b5b5;
}
.w3 {
  fill: none;
  stroke: #777;
}
.g {
  fill: none;
  stroke: #00e000;
}
.gf {
  fill: #00e000;
}
.dg {
  fill: none;
  stroke: #006400;
}
.dr {
  fill: none;
  stroke: #7a0000;
}
.hexes {
  fill: none;
  stroke: #007000;
}
.blob {
  fill: none;
  stroke: #fff;
  stroke-width: 4;
  stroke-dasharray: 5 1;
}
.cadtext {
  fill: #fff;
  font-family: "Open Sans", "Noto Sans", sans-serif;
  font-size: 17px;
}
.collapse {
  position: absolute;
  left: 0;
  top: 635px;
  width: 16px;
  height: 62px;
  padding-left: 5px;
  background: #505050;
  clip-path: polygon(0 0, 100% 8%, 100% 92%, 0 100%);
}
.collapse svg {
  fill: none;
  stroke: #bbb;
}

/* dialogs */
.dialog {
  position: absolute;
  display: flex;
  flex-direction: column;
  padding: 0 11px 11px;
  border-radius: 8px;
  background: #fff;
}
.dialog-calc {
  inset: 224px 295px 18px 125px;
}
.dialog-pick {
  inset: 291px 28px 83px 836px;
  box-shadow: 0 8px 40px rgba(0, 0, 0, 0.45), 0 0 1px #666;
}
.dialog-head {
  flex: none;
  display: flex;
  align-items: center;
  justify-content: space-between;
  height: 39px;
  padding: 0 1px 2px 0;
}
.dialog-head h1 {
  font-size: 14px;
}
.win {
  display: flex;
  gap: 16px;
}
.win svg {
  fill: none;
  stroke: #777;
}
.tabs {
  flex: none;
  display: flex;
  align-items: flex-end;
  gap: 1px;
  height: 25px;
}
.tabs button {
  height: 21px;
  padding: 0 7px;
  border-radius: 3px 3px 0 0;
  background: #dcdcdc;
  color: #555;
}
.tabs .on {
  z-index: 1;
  height: 26px;
  margin: 0 1px -1px;
  padding: 0 5px;
  border: 1px solid #bdbdbd;
  border-bottom: none;
  background: #fff;
  color: #2a7de1;
}
.tab-body {
  flex: 1;
  min-height: 0;
  display: flex;
  gap: 6px;
  padding: 9px;
  border: 1px solid #bdbdbd;
}
.cats {
  flex: none;
  display: flex;
  flex-direction: column;
  gap: 2px;
  width: 120px;
  padding: 2px 1px;
  border: 1px solid #c4c4c4;
}
.cats button {
  flex: none;
  height: 28px;
  padding: 0 0 0 12px;
  text-align: left;
  white-space: nowrap;
}
.cats .on {
  background: #c2d9f2;
}
.nodes {
  flex: 1;
  min-width: 0;
  display: flex;
  align-items: flex-start;
  border: 1px solid #bdbdbd;
}
.nodes table {
  width: 534px;
  table-layout: fixed;
  border-collapse: collapse;
}
.nodes th, .nodes td {
  height: 21px;
  padding: 0 2px;
  border: 1px solid #d0d0d0;
  border-top: none;
  border-left: none;
  font-weight: normal;
  white-space: nowrap;
}
.nodes th {
  padding: 0;
  background: #efefef;
}
.nodes thead th {
  height: 20px;
  padding-top: 1px;
}
.nodes .no {
  width: 22px;
}
.nodes .pic {
  width: 202px;
  background: #80bbfc;
  color: #fff;
  font-weight: bold;
}
.nodes td:nth-child(2) {
  background: #fffde5;
}
.nodes .on th {
  background: #80bbfc;
  color: #fff;
  font-weight: bold;
}
.nodes .on td:last-child {
  padding: 0;
}
.edit {
  display: flex;
  align-items: center;
  height: 20px;
  padding: 0 3px;
  border: 2px solid #62a3ea;
}
.edit input {
  flex: 1;
  min-width: 0;
  padding: 0;
  border: none;
  outline: none;
  line-height: 14px;
  height: 16px;
}
.edit svg {
  fill: #dceafc;
  stroke: #3b82e0;
}
.preview {
  flex: 1;
  min-width: 0;
  align-self: stretch;
  display: flex;
  flex-direction: column;
  margin: 200px 0 0 1px;
  padding: 0 7px;
  border-left: 1px solid #bdbdbd;
  border-top: 1px solid #bdbdbd;
}
.preview h3 {
  padding: 5px 0 0;
}
.preview-pic {
  flex: 1;
  background: #000;
}
.preview p {
  height: 47px;
  padding-top: 7px;
}
.dialog-foot {
  flex: none;
  display: flex;
  gap: 6px;
  padding-top: 7px;
}
.dialog-calc .dialog-foot {
  padding-top: 6px;
}
.dialog-foot.end {
  justify-content: flex-end;
  border-top: 1px solid #bdbdbd;
}
.btn {
  width: 80px;
  height: 26px;
  border: 1px solid #c4c4c4;
  border-radius: 4px;
  background: #fff;
}
.btn.primary {
  border-color: #2a7de1;
  background: #2a7de1;
  color: #fff;
}
.grip {
  position: absolute;
  right: 2px;
  bottom: 2px;
  stroke: #777;
  stroke-width: 2;
}

/* node picker */
.picks {
  flex: 1;
  min-height: 0;
  display: flex;
  align-items: flex-start;
  gap: 6px;
  margin-right: 1px;
  border-top: 1px solid #999;
  border-left: 1px solid #999;
}
.pick {
  flex: 1;
  position: relative;
  background: #000;
}
.pick.on::after {
  content: "";
  position: absolute;
  inset: 1px;
  border: 3px solid #2a7de1;
}
.pick svg {
  width: 100%;
}
.vbar {
  flex: none;
  align-self: stretch;
  display: flex;
  flex-direction: column;
  justify-content: space-between;
  width: 14px;
  margin-left: -2px;
  border: 1px solid #ccc;
  border-top: none;
  background: #f8f8f8;
}
.vbar button {
  display: flex;
  align-items: center;
  justify-content: center;
  height: 14px;
  border-bottom: 1px solid #bbb;
  background: #fff;
}
.vbar button:last-child {
  border-top: 1px solid #bbb;
  border-bottom: none;
}
.vbar svg {
  fill: #777;
}
.node-text {
  fill: #fff;
  font-family: "Liberation Mono", "Noto Sans CJK SC", monospace;
  font-size: 15px;
}
.node-text .mid {
  font-size: 14px;
}
.node-text .sm {
  font-size: 12px;
}
.node-text .green {
  fill: #0f0;
}
.node-name {
  fill: #0ff;
  font-size: 16px;
}
.note {
  flex: none;
  height: 74px;
  padding-top: 8px;
}

/* step marks over everything */
.marks {
  position: absolute;
  inset: 0;
  width: 100%;
  height: 100%;
  pointer-events: none;
}
.marks rect {
  fill: none;
  stroke: #ff2314;
  stroke-width: 3;
}
.marks path {
  fill: #ff2314;
}
```
